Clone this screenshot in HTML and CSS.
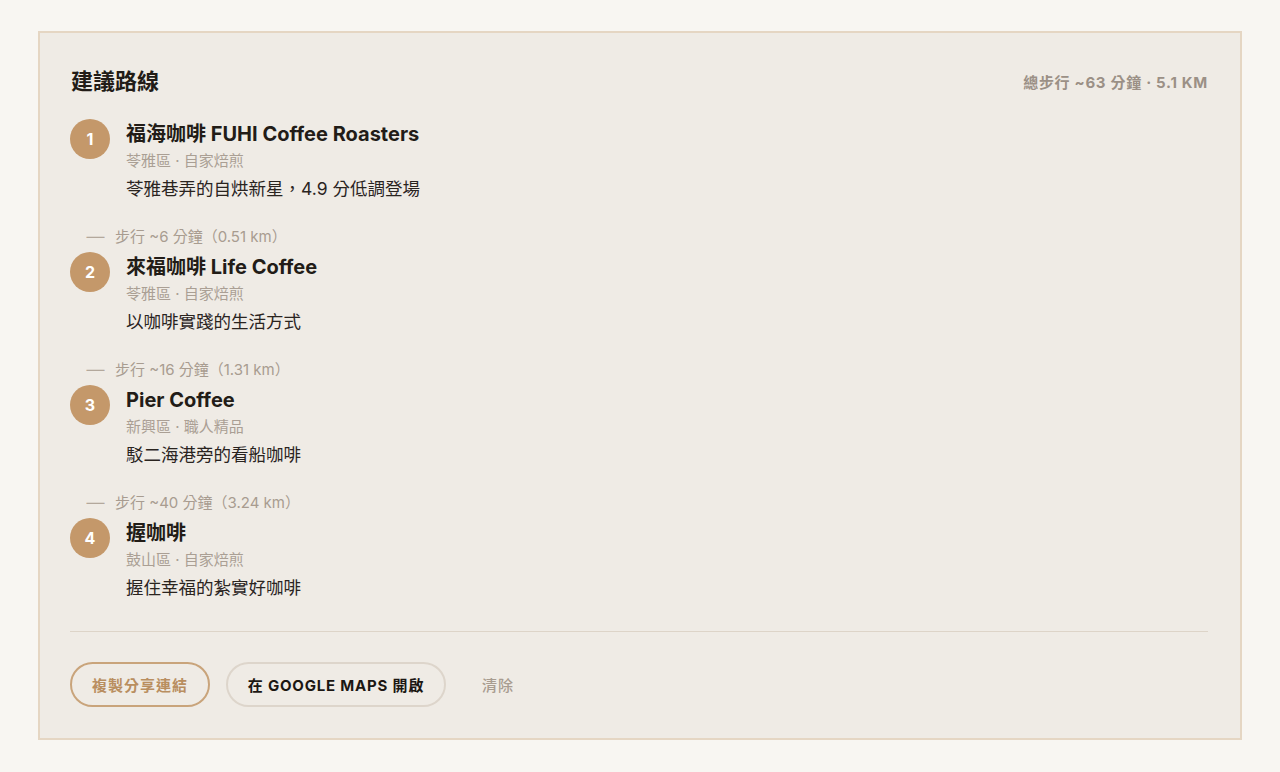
FILE: index.html
```html
<!DOCTYPE html>
<html lang="zh-Hant">
<head>
<meta charset="utf-8">
<title>建議路線</title>
<link rel="stylesheet" href="styles.css">
</head>
<body>
<section class="card">
  <header class="card-head">
    <h2 class="title">建議路線</h2>
    <div class="total">總步行 ~63 分鐘 · 5.1 KM</div>
  </header>
  <ol class="stops">
    <li class="stop">
      <span class="num">1</span>
      <div class="info">
        <div class="name">福海咖啡 FUHI Coffee Roasters</div>
        <div class="meta">苓雅區 · 自家焙煎</div>
        <div class="desc">苓雅巷弄的自烘新星，4.9 分低調登場</div>
      </div>
    </li>
    <li class="walk"><span class="dash">—</span>步行 ~6 分鐘（0.51 km）</li>
    <li class="stop">
      <span class="num">2</span>
      <div class="info">
        <div class="name">來福咖啡 Life Coffee</div>
        <div class="meta">苓雅區 · 自家焙煎</div>
        <div class="desc">以咖啡實踐的生活方式</div>
      </div>
    </li>
    <li class="walk"><span class="dash">—</span>步行 ~16 分鐘（1.31 km）</li>
    <li class="stop">
      <span class="num">3</span>
      <div class="info">
        <div class="name">Pier Coffee</div>
        <div class="meta">新興區 · 職人精品</div>
        <div class="desc">駁二海港旁的看船咖啡</div>
      </div>
    </li>
    <li class="walk"><span class="dash">—</span>步行 ~40 分鐘（3.24 km）</li>
    <li class="stop">
      <span class="num">4</span>
      <div class="info">
        <div class="name">握咖啡</div>
        <div class="meta">鼓山區 · 自家焙煎</div>
        <div class="desc">握住幸福的紮實好咖啡</div>
      </div>
    </li>
  </ol>
  <div class="actions">
    <button class="btn btn-copy">複製分享連結</button>
    <button class="btn btn-maps">在 GOOGLE MAPS 開啟</button>
    <button class="btn btn-clear">清除</button>
  </div>
</section>
</body>
</html>
```

FILE: styles.css
```css
* { box-sizing: border-box; }
html, body { margin: 0; padding: 0; }
body {
  background: #f8f6f2;
  font-family: "Inter", "Noto Sans CJK TC", sans-serif;
  color: #221c17;
  padding: 31px 38px 0 38px;
}
.card {
  background: #efebe5;
  border: 2px solid #e5d6c3;
  height: 709px;
  padding: 32px 32px 0 30px;
}
.card-head {
  display: flex;
  justify-content: space-between;
  align-items: center;
  height: 32px;
}
.title {
  margin: 0 0 0 1px;
  font-size: 22px;
  font-weight: 700;
  line-height: 32px;
  color: #221c17;
}
.total {
  font-size: 15px;
  font-weight: 700;
  color: #9b9086;
  letter-spacing: 0.7px;
}
.stops {
  list-style: none;
  margin: 22px 0 0 0;
  padding: 0;
}
.stop {
  display: flex;
  gap: 16px;
  align-items: flex-start;
}
.num {
  width: 40px;
  height: 40px;
  border-radius: 50%;
  background: #c4986a;
  color: #fff;
  font-weight: 700;
  font-size: 16px;
  display: flex;
  align-items: center;
  justify-content: center;
  flex: none;
}
.name {
  font-size: 20px;
  font-weight: 700;
  line-height: 30px;
  color: #221c17;
}
.meta {
  margin-top: 2px;
  font-size: 15px;
  line-height: 20px;
  color: #aa9f94;
}
.desc {
  margin-top: 6px;
  font-size: 17.5px;
  line-height: 24px;
  color: #2a241f;
}
.walk {
  margin: 26px 0 5px 0;
  padding-left: 18px;
  font-size: 15px;
  line-height: 20px;
  color: #a89c90;
  display: flex;
  align-items: center;
}
.dash {
  margin-right: 12px;
  color: #b3a89c;
  transform: scaleX(1.2);
  display: inline-block;
}
.actions {
  margin-top: 31px;
  border-top: 1px solid #ddd4c8;
  padding-top: 30px;
  display: flex;
  gap: 16px;
  align-items: center;
}
.btn {
  font-family: "Inter", "Noto Sans CJK TC", sans-serif;
  height: 45px;
  border-radius: 23px;
  font-size: 15px;
  font-weight: 700;
  letter-spacing: 1px;
  background: transparent;
  cursor: pointer;
  padding: 0 0 1px 0;
  white-space: nowrap;
  text-align: center;
}
.btn-copy {
  border: 2px solid #c9a47b;
  color: #b98e60;
  width: 140px;
}
.btn-maps {
  border: 2px solid #ddd5cb;
  color: #1c1713;
  width: 220px;
  letter-spacing: 0.8px;
}
.btn-clear {
  border: none;
  color: #a89c90;
  font-weight: 500;
  padding: 0 20px 1px 20px;
}
```
